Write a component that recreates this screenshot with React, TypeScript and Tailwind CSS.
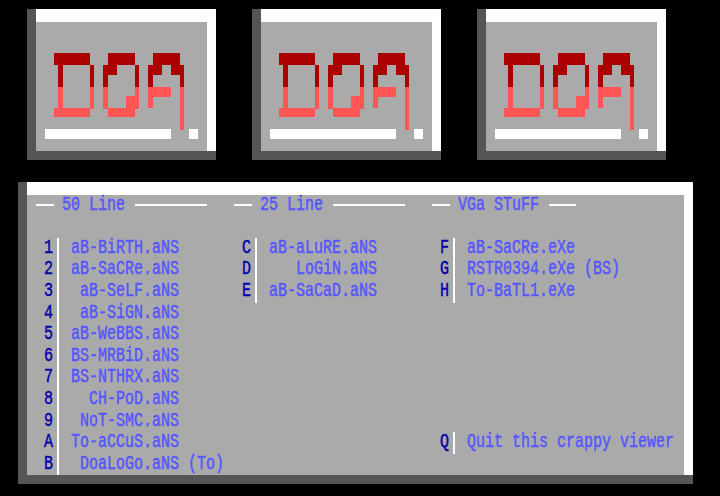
// DOA ansi viewer menu, 80 column text mode look (one cell = 9px wide, 21.6px tall)

import type { ReactNode } from 'react';

const DARK_RED = '#aa0000';
const LIGHT_RED = '#ff5555';

// x, y, w, h in page pixels of the first tile
const LOGO_RECTS: ReadonlyArray<readonly [string, number, number, number, number]> = [
  // D
  [DARK_RED, 54, 52.3, 36, 12],
  [DARK_RED, 58, 64.3, 5, 22],
  [DARK_RED, 90, 64.3, 4, 22],
  [LIGHT_RED, 58, 86.3, 5, 22],
  [LIGHT_RED, 90, 86.3, 4, 22],
  [LIGHT_RED, 54, 108, 36, 9],
  // O
  [DARK_RED, 108, 52.3, 27, 12],
  [DARK_RED, 103, 64.3, 14, 10],
  [DARK_RED, 103, 74, 5, 12.3],
  [DARK_RED, 135, 64.3, 4, 22],
  [LIGHT_RED, 103, 86.3, 5, 22],
  [LIGHT_RED, 135, 86.3, 4, 22],
  [LIGHT_RED, 126, 96, 13, 12],
  [LIGHT_RED, 108, 108, 27, 9],
  // A
  [DARK_RED, 153, 52.3, 27, 12],
  [DARK_RED, 148, 64.3, 14, 10],
  [DARK_RED, 148, 74, 5, 12.3],
  [DARK_RED, 171, 64.3, 13, 10],
  [DARK_RED, 180, 74, 4, 12.3],
  [LIGHT_RED, 148, 86.3, 23, 10],
  [LIGHT_RED, 148, 96, 5, 12],
  [LIGHT_RED, 180, 86.3, 4, 43],
  // underline and dot
  ['#ffffff', 45, 129, 126, 9.7],
  ['#ffffff', 189, 129, 9, 9.7],
];

function Bevel({ className, children }: { className: string; children: ReactNode }) {
  return (
    <div className={`bg-[#555555] pl-[9px] pb-[9px] ${className}`}>
      <div className="bg-white pt-[12.6px] pr-[9px]">
        <div className="bg-[#aaaaaa]">{children}</div>
      </div>
    </div>
  );
}

function Logo() {
  return (
    <svg
      viewBox="36 21.6 171 129.4"
      width={171}
      height={129.4}
      shapeRendering="crispEdges"
      className="block"
    >
      {LOGO_RECTS.map(([fill, x, y, w, h], i) => (
        <rect key={i} x={x} y={y} width={w} height={h} fill={fill} />
      ))}
    </svg>
  );
}

function Tall({ className, children }: { className: string; children: ReactNode }) {
  return (
    <span className={`inline-block whitespace-pre leading-[21.6px] scale-y-[1.3] -translate-x-px [-webkit-text-stroke:0.35px] ${className}`}>
      {children}
    </span>
  );
}

function Heading({ label, left, lineAfter, className }: { label: string; left: number; lineAfter: number; className: string }) {
  return (
    <div className={`flex items-center h-[21.6px] ${className}`}>
      <div className="h-[2px] bg-white" style={{ width: left }} />
      <Tall className="text-[#5555ff] mx-[9px]">{label}</Tall>
      <div className="h-[2px] bg-white" style={{ width: lineAfter }} />
    </div>
  );
}

function Entry({ k, label, className = '' }: { k: string; label: string; className?: string }) {
  return (
    <div className={`flex h-[21.6px] ${className}`}>
      <Tall className="w-[9px] text-[#0000aa]">{k}</Tall>
      <div className="ml-[3px] w-[2px] bg-white" />
      <Tall className="ml-[13px] text-[#5555ff]">{label}</Tall>
    </div>
  );
}

const COL_1 = [
  ['1', 'aB-BiRTH.aNS'],
  ['2', 'aB-SaCRe.aNS'],
  ['3', ' aB-SeLF.aNS'],
  ['4', ' aB-SiGN.aNS'],
  ['5', 'aB-WeBBS.aNS'],
  ['6', 'BS-MRBiD.aNS'],
  ['7', 'BS-NTHRX.aNS'],
  ['8', '  CH-PoD.aNS'],
  ['9', ' NoT-SMC.aNS'],
  ['A', 'To-aCCuS.aNS'],
  ['B', ' DoaLoGo.aNS (To)'],
];

const COL_2 = [
  ['C', 'aB-aLuRE.aNS'],
  ['D', '   LoGiN.aNS'],
  ['E', 'aB-SaCaD.aNS'],
];

const COL_3 = [
  ['F', 'aB-SaCRe.eXe'],
  ['G', 'RSTR0394.eXe (BS)'],
  ['H', 'To-BaTL1.eXe'],
];

export default function App() {
  return (
    <div className="w-[720px] h-[496px] overflow-hidden bg-black pt-[9px] text-[15px] font-['Liberation_Mono',monospace]">
      <div className="flex gap-[36px] pl-[27px]">
        <Bevel className="w-[189px]"><Logo /></Bevel>
        <Bevel className="w-[189px]"><Logo /></Bevel>
        <Bevel className="w-[189px]"><Logo /></Bevel>
      </div>

      <Bevel className="w-[675px] ml-[18px] mt-[22px]">
        <div className="h-[280.4px] pl-[9px]">
          <div className="flex">
            <Heading label="50 Line" left={18} lineAfter={72} className="w-[198px]" />
            <Heading label="25 Line" left={18} lineAfter={72} className="w-[198px]" />
            <Heading label="VGa STuFF" left={18} lineAfter={27} className="" />
          </div>
          <div className="mt-[21.6px] pl-[9px] grid grid-cols-[198px_198px_1fr] grid-rows-[repeat(11,21.6px)]">
            {COL_1.map(([k, label]) => (
              <Entry key={k} k={k} label={label} className="col-start-1" />
            ))}
            <div className="col-start-2 row-start-1 row-span-3">
              {COL_2.map(([k, label]) => (
                <Entry key={k} k={k} label={label} />
              ))}
            </div>
            <div className="col-start-3 row-start-1 row-span-3">
              {COL_3.map(([k, label]) => (
                <Entry key={k} k={k} label={label} />
              ))}
            </div>
            <Entry k="Q" label="Quit this crappy viewer" className="col-start-3 row-start-10" />
          </div>
        </div>
      </Bevel>
    </div>
  );
}
